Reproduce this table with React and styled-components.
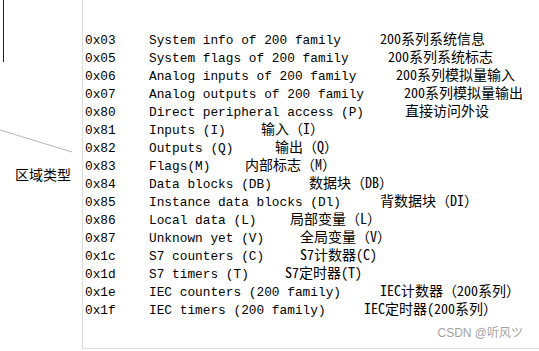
import React from 'react';
import styled, { createGlobalStyle } from 'styled-components';

const Global = createGlobalStyle`
  html, body { margin: 0; padding: 0; background: #fff; }
  body { width: 539px; height: 351px; overflow: hidden; }
`;

const Page = styled.div`
  display: flex;
  width: 539px;
  height: 351px;
  background: #fff;
`;

const Aside = styled.div`
  position: relative;
  width: 82px;
  flex: none;
  height: 349px;
  box-sizing: border-box;
  padding: 166px 0 0 15px;
`;

const Lines = styled.svg`
  position: absolute;
  left: 0;
  top: 0;
`;

const Label = styled.div`
  position: relative;
  font-family: "Noto Sans CJK SC", sans-serif;
  font-size: 14px;
  line-height: 16px;
  color: #000;
`;

const Panel = styled.div`
  flex: 1;
  height: 349px;
  box-sizing: border-box;
  border-left: 1px solid #dcdcdc;
  border-bottom: 1px solid #dcdcdc;
  padding: 31px 0 0 2px;
  display: flex;
  flex-direction: column;
`;

const Row = styled.div`
  display: flex;
  align-items: baseline;
  height: 18px;
  line-height: 18px;
  white-space: pre;
  color: #000;
`;

const Code = styled.span`
  width: 64px;
  flex: none;
  font-family: "Liberation Mono", monospace;
  font-size: 12.8px;
`;

const En = styled.span`
  width: ${(p) => p.$w}px;
  flex: none;
  font-family: "Liberation Mono", "Noto Sans CJK SC", monospace;
  font-size: 12.8px;
`;

const Cn = styled.span`
  font-family: "Noto Sans Mono CJK SC", "Noto Sans CJK SC", monospace;
  font-size: 14px;
  line-height: 14px;
`;

const Mark = styled.div`
  align-self: flex-end;
  margin: 7px 16px 0 0;
  font-family: "Liberation Sans", "Noto Sans CJK SC", sans-serif;
  font-size: 12px;
  line-height: 14px;
  color: #a3a3a3;
`;

const rows = [
  ['0x03', 'System info of 200 family', '200系列系统信息', 381],
  ['0x05', 'System flags of 200 family', '200系列系统标志', 389],
  ['0x06', 'Analog inputs of 200 family', '200系列模拟量输入', 397],
  ['0x07', 'Analog outputs of 200 family', '200系列模拟量输出', 405],
  ['0x80', 'Direct peripheral access (P)', '直接访问外设', 406],
  ['0x81', 'Inputs (I)', '输入（I）', 262],
  ['0x82', 'Outputs (Q)', '输出（Q）', 276],
  ['0x83', 'Flags(M)', '内部标志（M）', 246],
  ['0x84', 'Data blocks (DB)', '数据块（DB）', 310],
  ['0x85', 'Instance data blocks (Dl)', '背数据块（DI）', 381],
  ['0x86', 'Local data (L)', '局部变量（L）', 291],
  ['0x87', 'Unknown yet (V)', '全局变量（V）', 301],
  ['0x1c', 'S7 counters (C)', 'S7计数器(C)', 301],
  ['0x1d', 'S7 timers (T)', 'S7定时器(T)', 286],
  ['0x1e', 'IEC counters (200 family)', 'IEC计数器（200系列）', 381],
  ['0x1f', 'IEC timers (200 family)', 'IEC定时器(200系列）', 365],
];

export default function App() {
  return (
    <>
      <Global />
      <Page>
        <Aside>
          <Lines width="82" height="349" viewBox="0 0 82 349">
            <line x1="3.5" y1="0" x2="3.5" y2="62" stroke="#222" strokeWidth="1" />
            <line x1="0" y1="130" x2="72" y2="152" stroke="#b8b8b8" strokeWidth="1" />
          </Lines>
          <Label>区域类型</Label>
        </Aside>
        <Panel>
          {rows.map(([code, en, cn, x]) => (
            <Row key={code}>
              <Code>{code}</Code>
              <En $w={x - 150}>{en}</En>
              <Cn>{cn}</Cn>
            </Row>
          ))}
          <Mark>CSDN @听风ツ</Mark>
        </Panel>
      </Page>
    </>
  );
}
